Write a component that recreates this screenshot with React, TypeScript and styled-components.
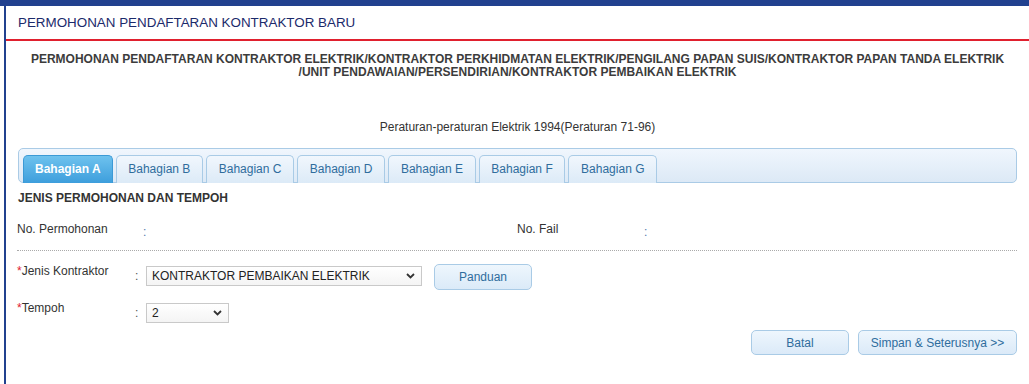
import styled, { createGlobalStyle } from "styled-components";

const GlobalStyle = createGlobalStyle`
    html, body {
        margin: 0;
        padding: 0;
        background: #ffffff;
        font-family: "Liberation Sans", Arial, sans-serif;
    }
`;

const TABS = ["A", "B", "C", "D", "E", "F", "G"];

const Page = styled.div`
    border-top: 6px solid #21418f;
    padding-left: 4px;
    height: 378px;
    overflow: hidden;
`;

const Frame = styled.div`
    border-left: 2px solid #21418f;
    height: 100%;
`;

const Header = styled.div`
    height: 33px;
    line-height: 33px;
    padding-left: 12px;
    font-size: 13.4px;
    color: #1b2a6b;
    border-bottom: 2px solid #e0202e;
`;

const Subtitle = styled.div`
    margin: 12px 20px 0;
    text-align: center;
    font-size: 12px;
    font-weight: bold;
    line-height: 13px;
    color: #3c3c3c;
`;

const Regulation = styled.div`
    margin-top: 41px;
    text-align: center;
    font-size: 12px;
    line-height: 14px;
    color: #333333;
`;

const Body = styled.div`
    margin: 14px 12px 0;
`;

const TabBar = styled.div`
    display: flex;
    align-items: flex-end;
    gap: 3px;
    height: 33px;
    padding: 0 4px;
    border: 1px solid #aacbe6;
    border-radius: 5px;
    background: linear-gradient(to bottom, #f0f6fd, #dce9f6);
`;

const Tab = styled.div<{ $active?: boolean }>`
    height: 28px;
    line-height: 27px;
    padding: 0 ${(p) => (p.$active ? "11px" : "11.7px")};
    font-size: 12px;
    box-sizing: border-box;
    border: 1px solid ${(p) => (p.$active ? "#3b9ad6" : "#a9cbe6")};
    border-bottom: none;
    border-radius: 5px 5px 0 0;
    color: ${(p) => (p.$active ? "#ffffff" : "#2f6d9d")};
    font-weight: ${(p) => (p.$active ? "bold" : "normal")};
    background: ${(p) =>
        p.$active
            ? "linear-gradient(to bottom, #6ec2ee, #3d9edc)"
            : "linear-gradient(to bottom, #f1f7fd, #dceaf7)"};
    margin-bottom: -1px;
`;

const SectionTitle = styled.div`
    margin-top: 8px;
    font-size: 12px;
    font-weight: bold;
    color: #333333;
    line-height: 14px;
`;

const InfoRow = styled.div`
    display: grid;
    grid-template-columns: 126px 374px 127px 1fr;
    margin-top: 17px;
    font-size: 12px;
    line-height: 14px;
    color: #333333;
    padding-bottom: 14px;
    border-bottom: 1px dotted #aaaaaa;
    margin-left: -1px;
`;

const Colon = styled.span`
    color: #5577aa;
    position: relative;
    top: 3px;
`;

const FormRow = styled.div<{ $top: number }>`
    display: grid;
    grid-template-columns: 118px 11px auto;
    align-items: start;
    margin-top: ${(p) => p.$top}px;
    font-size: 12px;
    color: #333333;
    margin-left: -1px;
`;

const Label = styled.div`
    line-height: 14px;
`;

const Req = styled.span`
    color: #e0202e;
`;

const ColonCell = styled.div`
    line-height: 14px;
    padding-top: 5px;
    color: #555555;
`;

const Controls = styled.div`
    display: flex;
    align-items: flex-start;
    gap: 12px;
`;

const SelectWrap = styled.div<{ $w: number }>`
    position: relative;
    width: ${(p) => p.$w}px;
    height: 20px;
    margin-top: 2px;
`;

const Select = styled.select`
    appearance: none;
    width: 100%;
    height: 100%;
    box-sizing: border-box;
    border: 1px solid #c9c9c9;
    border-radius: 0;
    background: linear-gradient(to bottom, #ffffff, #f4f4f4);
    font-family: "Liberation Sans", Arial, sans-serif;
    font-size: 12px;
    color: #222222;
    padding: 0 0 0 5px;
    outline: none;
`;

const Chevron = styled.svg`
    position: absolute;
    right: 7px;
    top: 7px;
    pointer-events: none;
`;

const Button = styled.button<{ $w: number }>`
    width: ${(p) => p.$w}px;
    height: 25px;
    border: 1px solid #a9cbe6;
    border-radius: 5px;
    background: linear-gradient(to bottom, #eef6fd, #dbeaf8);
    color: #2f6d9d;
    font-family: "Liberation Sans", Arial, sans-serif;
    font-size: 12px;
    padding: 0;
`;

const PanduanButton = styled(Button)`
    height: 26px;
`;

const Actions = styled.div`
    display: flex;
    justify-content: flex-end;
    gap: 9px;
    margin-top: 7px;
`;

const Dropdown = ({ width, value }: { width: number; value: string }) => (
    <SelectWrap $w={width}>
        <Select defaultValue={value}>
            <option>{value}</option>
        </Select>
        <Chevron width="9" height="6" viewBox="0 0 9 6">
            <path d="M1 1 L4.5 4.5 L8 1" fill="none" stroke="#333" strokeWidth="1.8" />
        </Chevron>
    </SelectWrap>
);

export default function App() {
    return (
        <>
            <GlobalStyle />
            <Page>
                <Frame>
                    <Header>PERMOHONAN PENDAFTARAN KONTRAKTOR BARU</Header>
                    <Subtitle>
                        PERMOHONAN PENDAFTARAN KONTRAKTOR ELEKTRIK/KONTRAKTOR PERKHIDMATAN ELEKTRIK/PENGILANG PAPAN SUIS/KONTRAKTOR PAPAN TANDA ELEKTRIK
                        <br />
                        /UNIT PENDAWAIAN/PERSENDIRIAN/KONTRAKTOR PEMBAIKAN ELEKTRIK
                    </Subtitle>
                    <Regulation>Peraturan-peraturan Elektrik 1994(Peraturan 71-96)</Regulation>
                    <Body>
                        <TabBar>
                            {TABS.map((t, i) => (
                                <Tab key={t} $active={i === 0}>
                                    Bahagian {t}
                                </Tab>
                            ))}
                        </TabBar>
                        <SectionTitle>JENIS PERMOHONAN DAN TEMPOH</SectionTitle>
                        <InfoRow>
                            <span>No. Permohonan</span>
                            <Colon>:</Colon>
                            <span>No. Fail</span>
                            <Colon>:</Colon>
                        </InfoRow>
                        <FormRow $top={13}>
                            <Label>
                                <Req>*</Req>Jenis Kontraktor
                            </Label>
                            <ColonCell>:</ColonCell>
                            <Controls>
                                <Dropdown width={276} value="KONTRAKTOR PEMBAIKAN ELEKTRIK" />
                                <PanduanButton $w={98}>Panduan</PanduanButton>
                            </Controls>
                        </FormRow>
                        <FormRow $top={11}>
                            <Label>
                                <Req>*</Req>Tempoh
                            </Label>
                            <ColonCell>:</ColonCell>
                            <Controls>
                                <Dropdown width={83} value="2" />
                            </Controls>
                        </FormRow>
                        <Actions>
                            <Button $w={98}>Batal</Button>
                            <Button $w={159}>Simpan &amp; Seterusnya &gt;&gt;</Button>
                        </Actions>
                    </Body>
                </Frame>
            </Page>
        </>
    );
}
